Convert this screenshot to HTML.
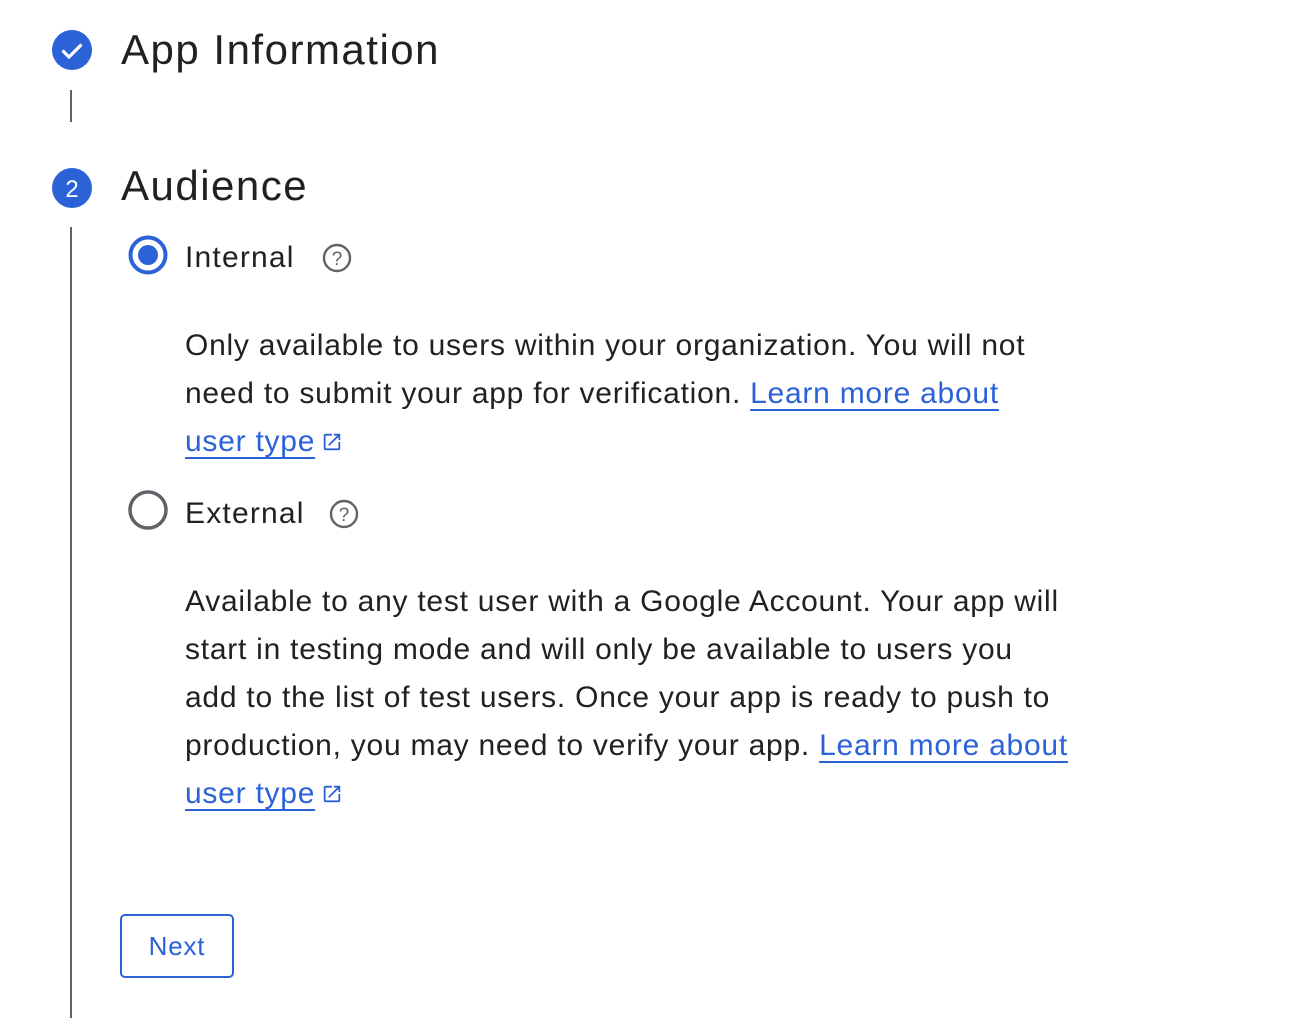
<!DOCTYPE html>
<html><head><meta charset="utf-8"><style>
body{margin:0;width:1312px;height:1018px;background:#fff;font-family:"Liberation Sans",sans-serif;color:#202124;position:relative;overflow:hidden}
.a{position:absolute}
.t{font-size:42px;line-height:50px;white-space:nowrap;letter-spacing:1.5px}
.p{font-size:30px;line-height:48px;white-space:nowrap;color:#202124;letter-spacing:0.75px}
.l{color:#2b62d8;text-decoration:underline;text-underline-offset:6px;text-decoration-thickness:2px}
.lab{font-size:30px;line-height:36px;letter-spacing:1.2px}
.ic{vertical-align:-2px;margin-left:6px}
</style></head><body>
<div class="a" style="left:70px;top:90px;width:2px;height:32px;background:#5f6368"></div>
<div class="a" style="left:70px;top:227px;width:2px;height:791px;background:#5f6368"></div>
<svg class="a" style="left:52px;top:30px" width="40" height="40"><circle cx="20" cy="20" r="20" fill="#2b62d8"/><path d="M10.5 20.5l6.5 6.5 12.5-12.5" stroke="#fff" stroke-width="3.2" fill="none"/></svg>
<div class="a t" style="left:121px;top:25px">App Information</div>
<svg class="a" style="left:52px;top:168px" width="40" height="40"><circle cx="20" cy="20" r="20" fill="#2b62d8"/><text x="20" y="29" text-anchor="middle" font-family="Liberation Sans" font-size="24" fill="#fff">2</text></svg>
<div class="a t" style="left:121px;top:161px">Audience</div>
<svg class="a" style="left:128px;top:235px" width="40" height="40"><circle cx="20" cy="20" r="17.5" stroke="#2b62d8" stroke-width="4" fill="none"/><circle cx="20" cy="20" r="10" fill="#2b62d8"/></svg>
<div class="a lab" style="left:185px;top:240px">Internal</div>
<svg class="a" style="left:322px;top:243px" width="30" height="30"><circle cx="15" cy="15" r="13" stroke="#5f6368" stroke-width="2.4" fill="none"/><text x="15" y="22" text-anchor="middle" font-family="Liberation Sans" font-size="19" fill="#5f6368">?</text></svg>
<div class="a p" style="left:185px;top:322px">Only available to users within your organization. You will not<br>need to submit your app for verification. <span class="l">Learn more about</span><br><span class="l">user type</span><svg class="ic" width="22" height="22" viewBox="0 0 24 24"><path d="M19 19H5V5h7V3H5a2 2 0 0 0-2 2v14a2 2 0 0 0 2 2h14a2 2 0 0 0 2-2v-7h-2v7zM14 3v2h3.6l-9.8 9.8 1.4 1.4L19 6.4V10h2V3h-7z" fill="#2b62d8"/></svg></div>
<svg class="a" style="left:128px;top:490px" width="40" height="40"><circle cx="20" cy="20" r="18" stroke="#5f6368" stroke-width="3.5" fill="none"/></svg>
<div class="a lab" style="left:185px;top:496px">External</div>
<svg class="a" style="left:329px;top:499px" width="30" height="30"><circle cx="15" cy="15" r="13" stroke="#5f6368" stroke-width="2.4" fill="none"/><text x="15" y="22" text-anchor="middle" font-family="Liberation Sans" font-size="19" fill="#5f6368">?</text></svg>
<div class="a p" style="left:185px;top:578px">Available to any test user with a Google Account. Your app will<br>start in testing mode and will only be available to users you<br>add to the list of test users. Once your app is ready to push to<br>production, you may need to verify your app. <span class="l">Learn more about</span><br><span class="l">user type</span><svg class="ic" width="22" height="22" viewBox="0 0 24 24"><path d="M19 19H5V5h7V3H5a2 2 0 0 0-2 2v14a2 2 0 0 0 2 2h14a2 2 0 0 0 2-2v-7h-2v7zM14 3v2h3.6l-9.8 9.8 1.4 1.4L19 6.4V10h2V3h-7z" fill="#2b62d8"/></svg></div>
<div class="a" style="left:120px;top:914px;width:110px;height:60px;border:2px solid #2b62d8;border-radius:5px;color:#2b62d8;font-size:26px;line-height:60px;text-align:center;letter-spacing:0.8px">Next</div>
</body></html>
